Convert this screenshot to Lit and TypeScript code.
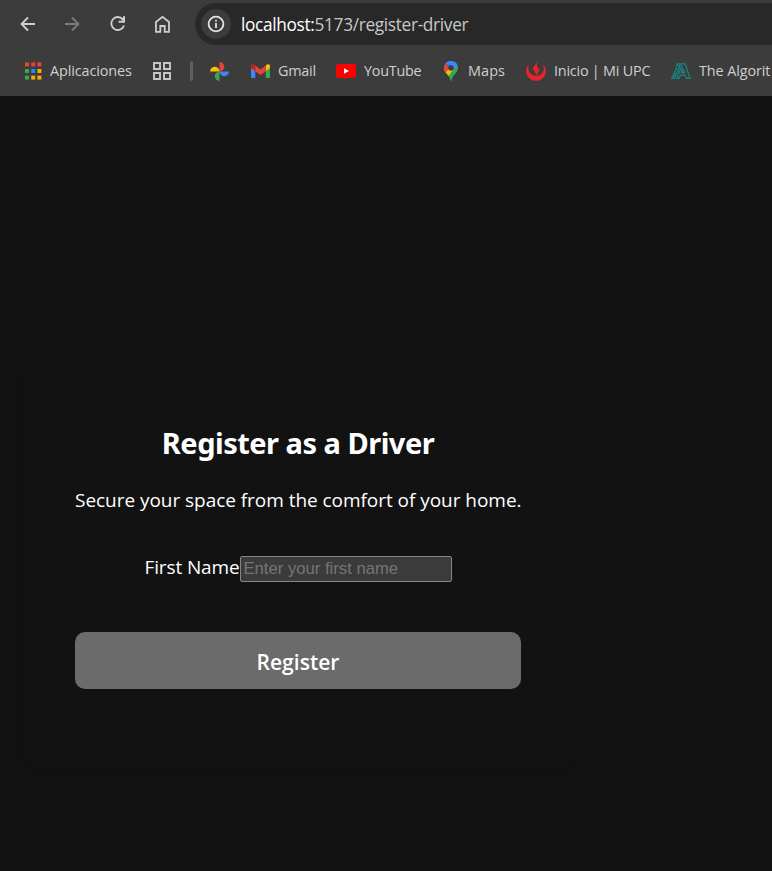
import { LitElement, html, css, svg } from "lit";
import { customElement } from "lit/decorators.js";

const back = svg`<path d="M15 7.5H2M8 1 1.5 7.5 8 14" />`;
const forward = svg`<path d="M0 7.5H13M7 1 13.5 7.5 7 14" />`;

@customElement("browser-toolbar")
class BrowserToolbar extends LitElement {
  static styles = css`
    :host { display: flex; height: 48px; box-sizing: border-box; padding-left: 20px; align-items: center; }
    .nav { display: flex; gap: 30px; width: 175px; flex: none; }
    .nav svg { width: 15px; height: 18px; overflow: visible; fill: none; stroke: #cfcfcf; stroke-width: 1.8; }
    .nav .off { stroke: #7c7c7c; }
    .nav .solid { fill: #cfcfcf; stroke: none; }
    .address { flex: 1; height: 42px; background: #282828; border-radius: 21px 0 0 21px; display: flex; align-items: center; padding-left: 6px; }
    .info { width: 30px; height: 30px; border-radius: 50%; background: #3c3c3c; display: grid; place-items: center; margin-right: 10px; }
    .url { font: 17.3px/24px "Open Sans", "Noto Sans", sans-serif; letter-spacing: -0.34px; color: #c7c7c7; white-space: nowrap; padding-top: 1px; }
    .host { color: #fff; }
  `;
  render() {
    return html`
      <div class="nav">
        <svg viewBox="0 -1.5 15 18">${back}</svg>
        <svg class="off" viewBox="0 -1.5 15 18">${forward}</svg>
        <svg viewBox="0 0 15 18"><path d="M12.7 4.2A6.5 6.5 0 1 0 14 10.5" /><path class="solid" d="M15 1.2V7.8H8.6V5.8H12.6L11 4.2 13 3V1.2Z" /></svg>
        <svg viewBox="0 0 15 18"><path d="M1 7 7.5 1.8 14 7V16.8H9.7V11H5.3V16.8H1Z" /></svg>
      </div>
      <div class="address">
        <div class="info">
          <svg width="18" height="18" viewBox="0 0 18 18" fill="none" stroke="#e3e3e3" stroke-width="1.8"><circle cx="9" cy="9" r="7.4" /><path d="M9 8V13M9 4.8V6.6" /></svg>
        </div>
        <div class="url"><span class="host">localhost:</span>5173/register-driver</div>
      </div>
    `;
  }
}

const gridColors = ["#ea4335", "#ea4335", "#ea4335", "#34a853", "#1a8cff", "#fbaa04", "#34a853", "#fbaa04", "#fbaa04"];

@customElement("bookmarks-bar")
class BookmarksBar extends LitElement {
  static styles = css`
    :host { display: flex; height: 48px; box-sizing: border-box; padding: 0 0 2px 25px; align-items: center; overflow: hidden; }
    .item { display: flex; align-items: center; flex: none; }
    .item svg { display: block; flex: none; }
    .label { font: 14.4px/20px "Open Sans", "Noto Sans", sans-serif; letter-spacing: -0.1px; color: #cfcfcf; white-space: nowrap; }
    .apps { width: 128px; gap: 8px; }
    .tabs { width: 37px; }
    .rule { flex: none; width: 3px; height: 20px; border-radius: 2px; background: #606060; margin-right: 17px; }
    .photos { width: 41px; }
    .gmail { width: 85px; gap: 8px; }
    .gmail .label, .youtube .label { letter-spacing: -0.25px; }
    .youtube { width: 105px; gap: 8px; }
    .maps { width: 85px; gap: 9px; }
    .maps .label { letter-spacing: 0.1px; }
    .upc { width: 145px; gap: 8px; }
    .upc .label { letter-spacing: -0.22px; }
    .algo { gap: 8px; }
    .algo .label { letter-spacing: -0.1px; }
  `;
  render() {
    return html`
      <div class="item apps">
        <svg width="17" height="18" viewBox="0 0 17 18">
          ${gridColors.map((c, i) => svg`<rect x=${(i % 3) * 6.2} y=${0.4 + Math.floor(i / 3) * 6.6} width="4" height="4" fill=${c} />`)}
        </svg>
        <span class="label">Aplicaciones</span>
      </div>
      <div class="item tabs">
        <svg width="18" height="18" viewBox="0 0 18 18" fill="none" stroke="#c7c7c7" stroke-width="1.9">
          <path d="M1 1H7V7H1ZM11 1H17V7H11ZM1 11H7V17H1ZM11 11H17V17H11Z" />
        </svg>
      </div>
      <div class="rule"></div>
      <div class="item photos">
        <svg width="19" height="19" viewBox="0 0 19 19">
          <path fill="#ea4335" d="M9.5 0A4.75 4.75 0 0 1 9.5 9.5Z" />
          <path fill="#4285f4" d="M19 9.5A4.75 4.75 0 0 1 9.5 9.5Z" />
          <path fill="#34a853" d="M9.5 19A4.75 4.75 0 0 1 9.5 9.5Z" />
          <path fill="#fbbc04" d="M0 9.5A4.75 4.75 0 0 1 9.5 9.5Z" />
        </svg>
      </div>
      <div class="item gmail">
        <svg width="19" height="14" viewBox="0 0 19 14">
          <path fill="#4285f4" d="M0 3.4 4.3 6.5V14H1.3Q0 14 0 12.7Z" />
          <path fill="#34a853" d="M19 3.4 14.7 6.5V14H17.7Q19 14 19 12.7Z" />
          <path fill="#fbbc04" d="M14.7 1.4C16.6-.5 19 0 19 2V4L14.7 7.2Z" />
          <path fill="#c5221f" d="M4.3 1.4C2.4-.5 0 0 0 2V4L4.3 7.2Z" />
          <path fill="#ea4335" d="M4.3 1.4 9.5 5.4 14.7 1.4V7.2L9.5 11.1 4.3 7.2Z" />
        </svg>
        <span class="label">Gmail</span>
      </div>
      <div class="item youtube">
        <svg width="20" height="14" viewBox="0 0 20 14"><rect width="20" height="14" rx="3" fill="#f00" /><path fill="#fff" d="M8 4.2V9.8L13 7Z" /></svg>
        <span class="label">YouTube</span>
      </div>
      <div class="item maps">
        <svg width="18" height="20" viewBox="-3 0 18 20">
          <defs><clipPath id="pin"><path d="M7 0C11 0 14 3 14 7 14 12 8.5 13.5 7.6 19.2Q7 20.4 6.4 19.2C5.5 13.5 0 12 0 7 0 3 3 0 7 0Z" /></clipPath></defs>
          <g clip-path="url(#pin)">
            <path fill="#34a853" d="M-1 0H15V20H-1Z" />
            <path fill="#fbbc04" d="M-1 10 5 3 9.5 8.5 2.8 17H-1Z" />
            <path fill="#ea4335" d="M-1 1H3L8 5 0.5 12.4H-1Z" />
            <path fill="#1a73e8" d="M1.5 2.4 4 -1H9L10 1 5 6.8Z" />
            <path fill="#4285f4" d="M5 6.8 10.6 0H15V4.5L9.3 8.5Z M1.5 2.4 4-1H11L7 4.4Z" />
          </g>
          <circle cx="7" cy="7" r="2.7" fill="#3c3c3c" />
        </svg>
        <span class="label">Maps</span>
      </div>
      <div class="item upc">
        <svg width="20" height="20" viewBox="0 0 20 20" fill="#e52529">
          <path d="M3 3.2C-1 7-.8 13.5 3 17 7 21 13.5 20.7 17 17 21 13 20.6 6.8 16.8 3.2 18.8 8 17.5 11.5 14.8 13.3 11.5 15.6 7.8 15.4 5 13.1 2.4 10.7 1.5 7 3 3.2Z" />
          <path d="M10.7 0C11.3 3.5 7.2 4.2 7.1 7.4 7 9.9 10 10.4 10 14.2 13.9 11.7 14 8.5 11.7 6.3 9.8 4.4 11.9 2.3 10.7 0Z" />
        </svg>
        <span class="label">Inicio | Mi UPC</span>
      </div>
      <div class="item algo">
        <svg width="20" height="16" viewBox="0 0 20 16" fill="none" stroke="#16877f" stroke-width="1.3">
          <path d="M.8 15.3 2 12.5H4.5L3.5 15.3ZM2.8 10.8H5.5L9.8 .8H6.2L5.6 2.6H8.6M2.8 10.8 5.8 4.4M10.4 .8H14L19.2 15.3H15.5L14.2 12.3H9.3L8 15.3H5.7L11.2 2.6M10.3 9.8H13.5L11.9 5.8Z" />
        </svg>
        <span class="label">The Algorit</span>
      </div>
    `;
  }
}

@customElement("register-form")
class RegisterForm extends LitElement {
  static styles = css`
    :host { display: block; width: 446px; padding: 50px; border-radius: 12.5px; box-shadow: 0 5px 12.5px rgba(0, 0, 0, 0.08); color: #fff; text-align: center; font: 19px/30px "Open Sans", "Noto Sans", sans-serif; }
    h2, p { margin: 0; white-space: nowrap; }
    h2 { font: 700 29px/40px "Noto Sans", sans-serif; letter-spacing: -0.5px; padding-top: 7px; }
    .lead { padding-top: 22px; letter-spacing: -0.04px; }
    .field { display: flex; justify-content: center; align-items: center; margin-top: 39px; }
    .field label { width: 95px; margin-top: -2px; white-space: nowrap; text-align: left; letter-spacing: -0.12px; }
    .field input { box-sizing: border-box; width: 212px; height: 26px; margin: 2px 0 0; border: 1px solid #858585; border-radius: 2px; background: #3b3b3b; color: #fff; padding: 1px 3px; font: 16.67px "Liberation Sans", sans-serif; }
    .field input::placeholder { color: #757575; }
    button { display: block; width: 100%; height: 57px; margin-top: 50px; border: 0; border-radius: 10px; background: #6b6b6b; color: #fff; font: 600 21px/30px "Open Sans", "Noto Sans", sans-serif; letter-spacing: 0.02px; padding: 3px 0 0; }
  `;
  render() {
    return html`
      <h2>Register as a Driver</h2>
      <p class="lead">Secure your space from the comfort of your home.</p>
      <div class="field"><label for="first">First Name</label><input id="first" placeholder="Enter your first name" /></div>
      <button type="button">Register</button>
    `;
  }
}

@customElement("app-root")
class AppRoot extends LitElement {
  static styles = css`
    :host { display: flex; flex-direction: column; height: 871px; background: #121212; overflow: hidden; }
    .chrome { flex: none; height: 96px; background: #3c3c3c; }
    .page { flex: 1; padding: 270px 0 0 25px; }
    .card { height: 297px; }
  `;
  render() {
    return html`
      <div class="chrome"><browser-toolbar></browser-toolbar><bookmarks-bar></bookmarks-bar></div>
      <div class="page"><register-form class="card"></register-form></div>
    `;
  }
}
